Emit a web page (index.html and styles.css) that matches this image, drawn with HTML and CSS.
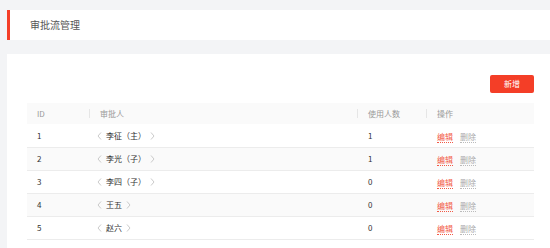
FILE: index.html
```html
<!DOCTYPE html>
<html>
<head>
  <meta charset="UTF-8">
  <title>审批流管理</title>
  <link rel="stylesheet" href="styles.css">
</head>
<body>
  <div class="page-head">审批流管理</div>
  <div class="panel">
    <div class="toolbar">
      <a href="javascript:;" class="btn-add">新增</a>
    </div>
    <table class="flow-table">
      <thead>
        <tr>
          <th class="col-id">ID</th>
          <th class="col-name">审批人</th>
          <th class="col-num">使用人数</th>
          <th class="col-op">操作</th>
        </tr>
      </thead>
      <tbody>
        <tr>
          <td>1</td>
          <td><span class="arr"><svg width="5" height="8" viewBox="0 0 5 8"><path d="M4 0.5L1 4L4 7.5" fill="none" stroke="#c4c4c4" stroke-width="0.9"/></svg></span><span class="who">李征（主）</span><span class="arr"><svg width="5" height="8" viewBox="0 0 5 8"><path d="M1 0.5L4 4L1 7.5" fill="none" stroke="#c4c4c4" stroke-width="0.9"/></svg></span></td>
          <td>1</td>
          <td><a href="javascript:;" class="op edit">编辑</a><a href="javascript:;" class="op del">删除</a></td>
        </tr>
        <tr>
          <td>2</td>
          <td><span class="arr"><svg width="5" height="8" viewBox="0 0 5 8"><path d="M4 0.5L1 4L4 7.5" fill="none" stroke="#c4c4c4" stroke-width="0.9"/></svg></span><span class="who">李光（子）</span><span class="arr"><svg width="5" height="8" viewBox="0 0 5 8"><path d="M1 0.5L4 4L1 7.5" fill="none" stroke="#c4c4c4" stroke-width="0.9"/></svg></span></td>
          <td>1</td>
          <td><a href="javascript:;" class="op edit">编辑</a><a href="javascript:;" class="op del">删除</a></td>
        </tr>
        <tr>
          <td>3</td>
          <td><span class="arr"><svg width="5" height="8" viewBox="0 0 5 8"><path d="M4 0.5L1 4L4 7.5" fill="none" stroke="#c4c4c4" stroke-width="0.9"/></svg></span><span class="who">李四（子）</span><span class="arr"><svg width="5" height="8" viewBox="0 0 5 8"><path d="M1 0.5L4 4L1 7.5" fill="none" stroke="#c4c4c4" stroke-width="0.9"/></svg></span></td>
          <td>0</td>
          <td><a href="javascript:;" class="op edit">编辑</a><a href="javascript:;" class="op del">删除</a></td>
        </tr>
        <tr>
          <td>4</td>
          <td><span class="arr"><svg width="5" height="8" viewBox="0 0 5 8"><path d="M4 0.5L1 4L4 7.5" fill="none" stroke="#c4c4c4" stroke-width="0.9"/></svg></span><span class="who">王五</span><span class="arr"><svg width="5" height="8" viewBox="0 0 5 8"><path d="M1 0.5L4 4L1 7.5" fill="none" stroke="#c4c4c4" stroke-width="0.9"/></svg></span></td>
          <td>0</td>
          <td><a href="javascript:;" class="op edit">编辑</a><a href="javascript:;" class="op del">删除</a></td>
        </tr>
        <tr>
          <td>5</td>
          <td><span class="arr"><svg width="5" height="8" viewBox="0 0 5 8"><path d="M4 0.5L1 4L4 7.5" fill="none" stroke="#c4c4c4" stroke-width="0.9"/></svg></span><span class="who">赵六</span><span class="arr"><svg width="5" height="8" viewBox="0 0 5 8"><path d="M1 0.5L4 4L1 7.5" fill="none" stroke="#c4c4c4" stroke-width="0.9"/></svg></span></td>
          <td>0</td>
          <td><a href="javascript:;" class="op edit">编辑</a><a href="javascript:;" class="op del">删除</a></td>
        </tr>
      </tbody>
    </table>
  </div>
</body>
</html>
```

FILE: styles.css
```css
* {
  margin: 0;
  padding: 0;
  box-sizing: border-box;
}
a {
  text-decoration: none;
}
body {
  background: #f3f4f6;
  font-family: "Noto Sans CJK SC", "Noto Sans", sans-serif;
  color: #333;
  overflow: hidden;
}
.page-head {
  margin: 10px 0 0 7px;
  height: 30px;
  line-height: 30px;
  padding-left: 20px;
  background: #fff;
  border-left: 3px solid #f43e27;
  font-size: 10px;
  color: #555;
}
.panel {
  margin: 14px 0 0 7px;
  padding: 21px 16px 20px 20px;
  background: #fff;
  height: 200px;
}
.toolbar {
  display: flex;
  justify-content: flex-end;
  margin-bottom: 10px;
}
.btn-add {
  display: block;
  width: 44px;
  height: 18px;
  line-height: 18px;
  text-align: center;
  background: #f43e27;
  border-radius: 2px;
  color: #fff;
  font-size: 8px;
}
.flow-table {
  width: 507px;
  border-collapse: collapse;
  font-size: 8px;
}
.flow-table th {
  position: relative;
  height: 21px;
  padding-left: 10px;
  text-align: left;
  font-weight: normal;
  color: #999;
  background: #fafafa;
}
.flow-table th + th::before {
  content: "";
  position: absolute;
  left: 0;
  top: 6px;
  width: 1px;
  height: 9px;
  background: #e6e6e6;
}
.flow-table th.col-name,
.flow-table th.col-num,
.flow-table th.col-op {
  padding-left: 11px;
}
.col-id { width: 62px; }
.col-name { width: 268px; }
.col-num { width: 69px; }
.col-op { width: 108px; }
.flow-table td {
  height: 23px;
  padding-left: 10px;
  border-bottom: 1px solid #ececec;
  color: #333;
}
.flow-table td:nth-child(2) {
  padding-left: 6px;
}
.flow-table td:nth-child(3),
.flow-table td:nth-child(4) {
  padding-left: 11px;
}
.flow-table tbody tr:nth-child(even) td {
  background: #fafafa;
}
.arr {
  display: inline-block;
  vertical-align: middle;
  margin: 0 4px 0 2px;
  line-height: 0;
}
.arr + .who + .arr {
  margin: 0 0 0 4px;
}
.who {
  vertical-align: middle;
}
.op {
  display: inline-block;
  margin-top: 3px;
  margin-right: 7px;
  border-bottom: 1px dotted;
  line-height: 11px;
}
.edit {
  color: #f25a47;
  border-color: #f25a47;
}
.del {
  color: #aaa;
  border-color: #bbb;
}
```
